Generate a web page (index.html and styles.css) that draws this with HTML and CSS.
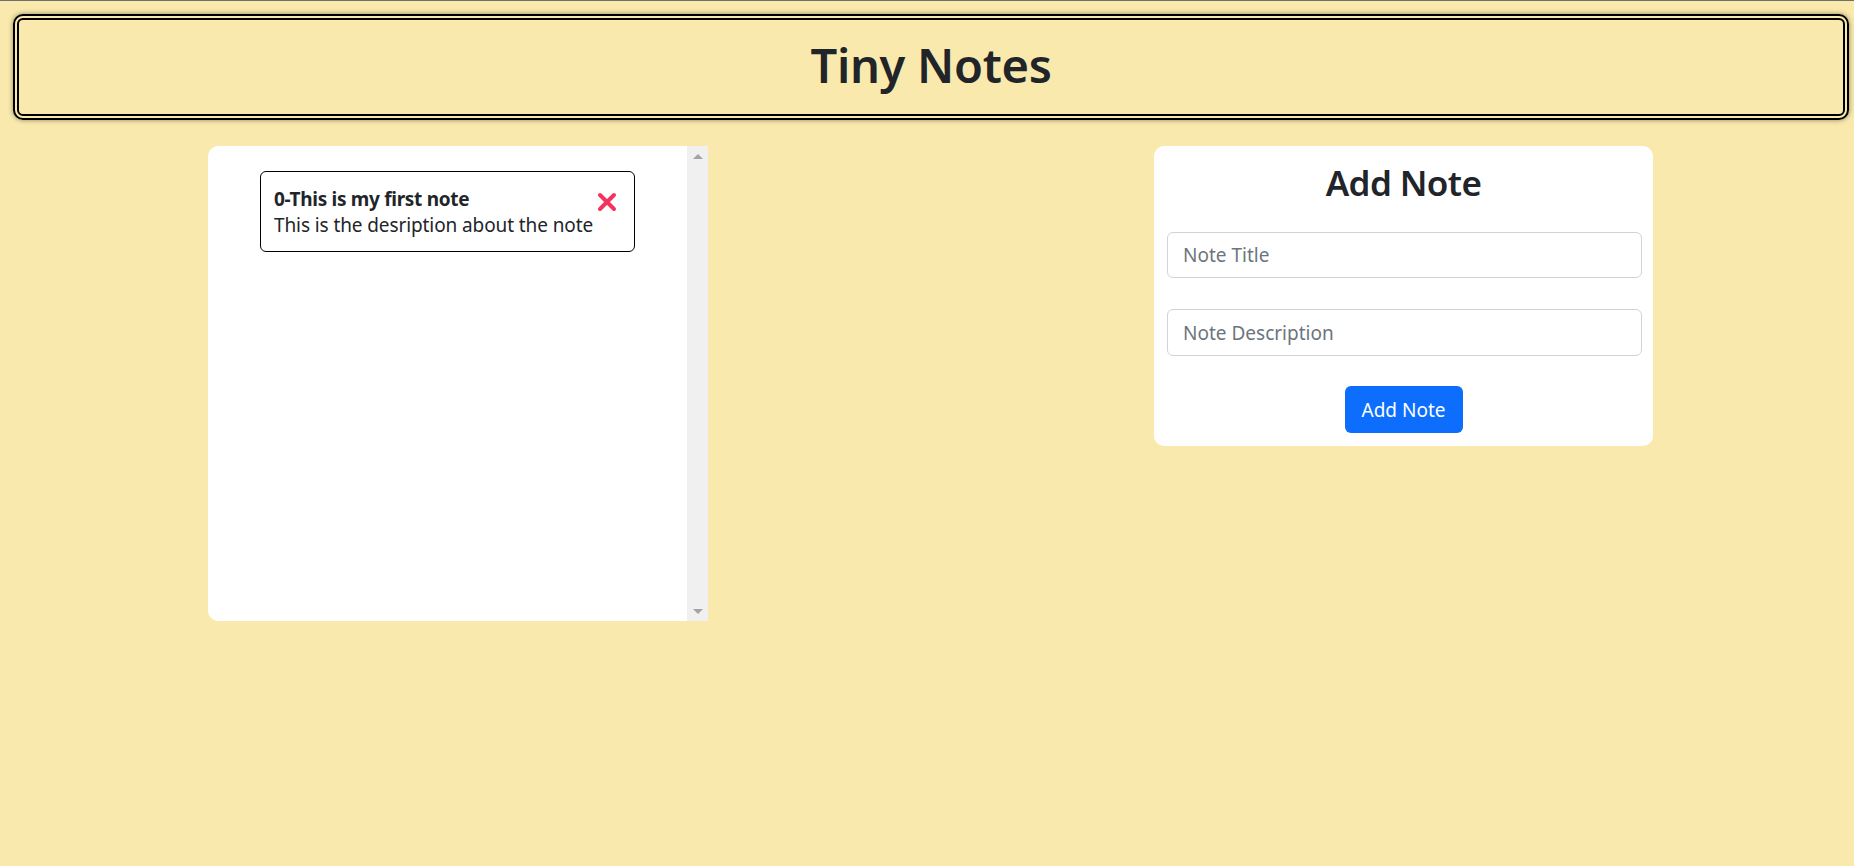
FILE: index.html
```html
<!DOCTYPE html>
<html lang="en">
<head>
<meta charset="utf-8">
<title>Tiny Notes</title>
<link rel="stylesheet" href="styles.css">
</head>
<body>
<header class="banner">
  <h1 class="banner-title">Tiny Notes</h1>
</header>
<main class="layout">
  <section class="notes-panel">
    <div class="notes-list">
      <article class="note">
        <div class="note-body">
          <h2 class="note-title">0-This is my first note</h2>
          <p class="note-desc">This is the desription about the note</p>
        </div>
        <button class="note-delete" aria-label="Delete note">
          <svg width="20" height="20" viewBox="0 0 20 20"><path d="M3 3 L17 17 M17 3 L3 17" stroke="#f5335f" stroke-width="4" stroke-linecap="round"/></svg>
        </button>
      </article>
    </div>
    <div class="scrollbar">
      <span class="arrow arrow-up"></span>
      <span class="arrow arrow-down"></span>
    </div>
  </section>
  <section class="form-card">
    <h2 class="form-title">Add Note</h2>
    <input class="field" type="text" placeholder="Note Title">
    <input class="field" type="text" placeholder="Note Description">
    <div class="actions">
      <button class="btn-add">Add Note</button>
    </div>
  </section>
</main>
</body>
</html>
```

FILE: styles.css
```css
* { box-sizing: border-box; }

body {
  margin: 0;
  border-top: 1px solid #6f6f6f;
  background: #fae9ad;
  color: #212529;
  font-family: "Noto Sans", "Open Sans", sans-serif;
  min-height: 866px;
}

.banner {
  margin: 13px 5px 0 13px;
  height: 106px;
  border: 6px double #000;
  border-radius: 10px;
  box-shadow: 0 0 5px rgba(0, 0, 0, 0.45);
  display: flex;
  align-items: center;
  justify-content: center;
}

.banner-title {
  margin: 0 0 4px;
  font-size: 47px;
  font-weight: 600;
  line-height: 1.2;
  letter-spacing: -0.3px;
}

.layout {
  display: flex;
  align-items: flex-start;
  gap: 446px;
  padding-left: 208px;
  margin-top: 26px;
}

.notes-panel {
  width: 500px;
  height: 475px;
  background: #fff;
  border-radius: 10px 0 0 10px;
  display: flex;
}

.notes-list {
  flex: 1;
  padding-top: 25px;
  display: flex;
  flex-direction: column;
  align-items: center;
}

.note {
  width: 375px;
  height: 81px;
  border: 1px solid #000;
  border-radius: 6px;
  padding: 14px 13px 0 13px;
  display: flex;
  justify-content: space-between;
  align-items: flex-start;
}

.note-title {
  margin: 0;
  font-size: 19px;
  font-weight: 700;
  line-height: 26px;
  letter-spacing: -0.3px;
}

.note-desc {
  margin: 0;
  font-size: 19px;
  line-height: 27px;
  letter-spacing: -0.1px;
}

.note-delete {
  margin: 6px 4px 0 0;
  padding: 0;
  border: 0;
  background: none;
  width: 20px;
  height: 20px;
  display: flex;
}

.scrollbar {
  width: 21px;
  background: #f0f0f0;
  display: flex;
  flex-direction: column;
  justify-content: space-between;
  align-items: center;
  padding: 8px 0 7px;
}

.arrow {
  width: 0;
  height: 0;
  border-left: 5px solid transparent;
  border-right: 5px solid transparent;
}

.arrow-up { border-bottom: 5px solid #a3a3a3; }
.arrow-down { border-top: 5px solid #a3a3a3; }

.form-card {
  width: 499px;
  background: #fff;
  border-radius: 10px;
  padding: 14px 13px 13px;
  display: flex;
  flex-direction: column;
}

.form-title {
  margin: 0 0 26px;
  text-align: center;
  font-size: 35px;
  font-weight: 600;
  line-height: 46px;
  letter-spacing: -0.6px;
}

.field {
  width: 475px;
  height: 46px;
  margin: 0 0 31px;
  padding: 0 15px;
  border: 1px solid #ced4da;
  border-radius: 6px;
  font-family: inherit;
  font-size: 19px;
  color: #212529;
  background: #fff;
}

.field::placeholder { color: #6c757d; }

.field + .field { height: 47px; margin-bottom: 30px; }

.actions {
  display: flex;
  justify-content: center;
}

.btn-add {
  width: 118px;
  height: 47px;
  border: 0;
  border-radius: 6px;
  background: #0d6efd;
  color: #fff;
  font-family: inherit;
  font-size: 19px;
}
```
